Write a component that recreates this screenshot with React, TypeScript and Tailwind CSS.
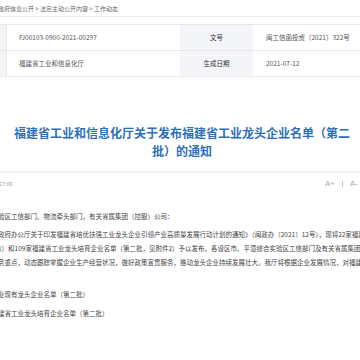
import React from "react";

const cjk = { fontFamily: '"Noto Sans CJK SC", "Noto Sans", sans-serif' };

export default function App() {
  return (
    <div className="w-[360px] h-[360px] overflow-hidden bg-white flex flex-col" style={cjk}>
      {/* breadcrumb */}
      <div className="h-[17px] shrink-0 border-b border-[#eeeeee] flex items-center whitespace-nowrap">
        <span className="-ml-[2px] text-[6px] text-[#666]">政府信息公开 &gt; 法定主动公开内容 &gt; 工作动态</span>
      </div>

      {/* info table */}
      <div className="mt-[7px] shrink-0 border-t border-[#e8e8e8] grid grid-cols-[6px_174px_73px_107px] text-[6.5px]">
        <div className="h-[26px] bg-[#f3f5f8] border-b border-[#e8e8e8]" />
        <div className="h-[26px] border-b border-l border-[#e8e8e8] flex items-center pl-[12px] text-[#555]">FJ00103-0900-2021-00297</div>
        <div className="h-[26px] bg-[#f3f5f8] border-b border-[#e8e8e8] flex items-center justify-center text-[#333]">文号</div>
        <div className="h-[26px] border-b border-[#e8e8e8] flex items-center pl-[13px] text-[#555] whitespace-nowrap">闽工信函投资〔2021〕322号</div>
        <div className="h-[26px] bg-[#f3f5f8] border-b border-[#e8e8e8]" />
        <div className="h-[26px] border-b border-l border-[#e8e8e8] flex items-center pl-[12px] text-[#555]">福建省工业和信息化厅</div>
        <div className="h-[26px] bg-[#f3f5f8] border-b border-[#e8e8e8] flex items-center justify-center text-[#333]">生成日期</div>
        <div className="h-[26px] border-b border-[#e8e8e8] flex items-center pl-[13px] text-[#555]">2021-07-12</div>
      </div>

      {/* title */}
      <div className="mt-[47px] shrink-0 flex flex-col items-center pl-[4px] text-[12px] leading-[18px] font-bold text-[#2c6fbb] whitespace-nowrap">
        <div>福建省工业和信息化厅关于发布福建省工业龙头企业名单（第二</div>
        <div>批）的通知</div>
      </div>

      {/* separator */}
      <div className="mt-[11px] shrink-0 h-[2px] bg-[#f2f2f2]" />

      {/* meta row */}
      <div className="mt-[5px] shrink-0 h-[12px] flex items-center justify-between">
        <span className="-ml-[1px] text-[5.5px] text-[#999]">17:06</span>
        <div className="flex items-center text-[8px] text-[#aaa] pr-[2px]" style={{ fontFamily: '"Liberation Sans", Arial, sans-serif' }}>
          <span>A+</span>
          <span className="mx-[7px] w-px h-[6px] bg-[#ccc]" />
          <span>A-</span>
        </div>
      </div>

      {/* body */}
      <div className="mt-[19px] shrink-0 text-[6.5px] leading-[14px] text-[#444] whitespace-nowrap">
        <div className="-ml-[2px]">验区工信部门、物流牵头部门，有关省属集团（控股）公司：</div>
        <div className="mt-[4px] -ml-[2px]">政府办公厅关于印发福建省培优扶强工业龙头企业引领产业高质量发展行动计划的通知》（闽政办〔2021〕12号），现将22家福建省工业龙头企业</div>
        <div className="-ml-[2px]">1）和109家福建省工业龙头培育企业名单（第二批，见附件2）予以发布。各设区市、平潭综合实验区工信部门及有关省属集团（控股）公司</div>
        <div className="-ml-[2px]">务重点，动态跟踪掌握企业生产经营状况，做好政策宣贯服务，推动龙头企业持续发展壮大。我厅将根据企业发展情况，对福建省工业龙头</div>
        <div className="mt-[18px] -ml-[2px]">业现有龙头企业名单（第二批）</div>
        <div className="mt-[5px] -ml-[2px]">建省工业龙头培育企业名单（第二批）</div>
      </div>
    </div>
  );
}
